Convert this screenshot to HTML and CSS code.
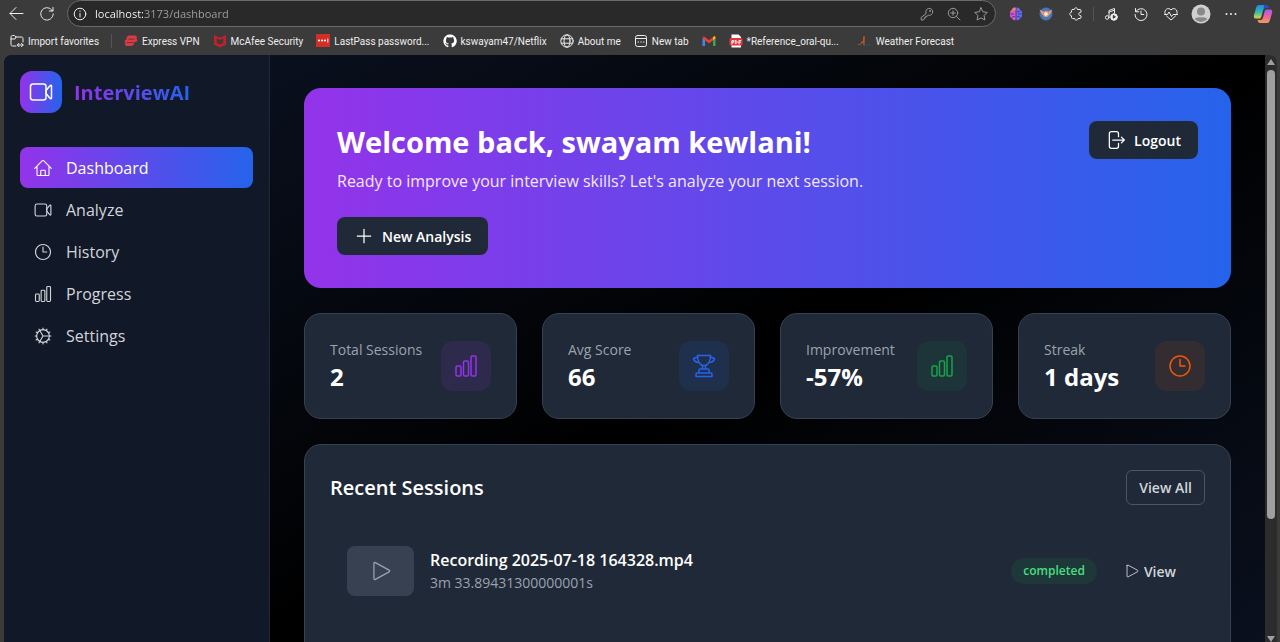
FILE: index.html
```html
<!DOCTYPE html>
<html lang="en">
<head>
    <meta charset="UTF-8">
    <meta name="viewport" content="width=device-width, initial-scale=1.0">
    <title>InterviewAI - Dashboard</title>
    <link rel="stylesheet" href="styles.css">
</head>
<body>
    <!-- Shared icons -->
    <svg class="sprite" aria-hidden="true">
        <symbol id="video" viewBox="0 0 24 24"><rect x="1.500" y="4" width="15.500" height="16" rx="2.500"/><path d="M17 10.500l4.200-5c.5-.5 1.300-.2 1.300.5v12c0 .7-.8 1-1.300.5l-4.200-5z"/></symbol>
        <symbol id="clock" viewBox="0 0 24 24"><circle cx="12" cy="12" r="10"/><path d="M12 5.500V12h5"/></symbol>
        <symbol id="bars" viewBox="0 0 24 24"><rect x="2" y="12" width="5" height="10" rx="1.200"/><rect x="9.500" y="7" width="5" height="15" rx="1.200"/><rect x="17" y="2" width="5" height="20" rx="1.200"/></symbol>
        <symbol id="play" viewBox="0 0 24 24"><path d="M3.500 3v18c0 1 .8 1.500 1.700 1.100l16.500-9c1-.5 1-1.700 0-2.200L5.200 1.900C4.300 1.500 3.500 2 3.500 3z"/></symbol>
    </svg>

    <header class="browser">
        <div class="toolbar">
            <button class="tool" aria-label="Back"><svg width="16" height="16" viewBox="0 0 16 16"><path d="M14 7.500H1M7 1.500l-6 6 6 6"/></svg></button>
            <button class="tool" aria-label="Reload"><svg width="16" height="16" viewBox="0 0 16 16"><path d="M13.500 5A6.200 6.200 0 1 0 14.200 8M14 1.500V5h-3.700"/></svg></button>
            <div class="address">
                <svg width="14" height="14" viewBox="0 0 14 14"><circle cx="7" cy="7" r="5.800"/><path d="M7 6.500V10M7 4v.5"/></svg>
                <input class="url" type="text" aria-label="Address" value="localhost:3173/dashboard">
                <svg class="dim" width="14" height="14" viewBox="0 0 14 14"><path d="M6 6.200a3.500 3.500 0 1 1 2.200 2L7 9.300H5.700v1.400H4.300V12l-1 1H1.200v-2.200z"/><circle cx="10" cy="4" r=".5"/></svg>
                <svg class="dim" width="14" height="14" viewBox="0 0 14 14"><circle cx="6" cy="6" r="4.700"/><path d="M9.500 9.500L13 13M6 3.800v4.400M3.800 6h4.400"/></svg>
                <svg class="dim" width="14" height="14" viewBox="0 0 14 14"><path d="M7 .8l1.900 4 4.300.6-3.100 3.100.8 4.500L7 10.900 3.100 13l.8-4.500L.8 5.400l4.300-.6z"/></svg>
            </div>
            <button class="tool" aria-label="Brain"><svg class="solid" width="14" height="14" viewBox="0 0 14 14"><path fill="#d955c8" d="M6.600 1v12C5 13.800 3 12.700 3 11 1.200 10.500.5 8.500 1.200 7 .5 5 1.500 3.300 3 3c.2-2 2.400-3 3.600-2z"/><path fill="#6a6bf0" d="M7.400 1v12c1.600.8 3.600-.3 3.600-2 1.800-.5 2.500-2.500 1.800-4 .7-2-.3-3.700-1.800-4-.2-2-2.400-3-3.600-2z"/><path fill="#f0836b" d="M3 3c.2-2 2.400-3 3.600-2v2.500C5 3 4 4 1.500 4.500 1.800 3.600 2.300 3.100 3 3z"/><path class="crease" d="M2 7h2.500M3.500 10l2-.5M12 7H9.500M10.500 4.500L8.500 5M10.500 10l-2-.5"/></svg></button>
            <button class="tool" aria-label="Web assistant"><svg class="solid" width="14" height="14" viewBox="0 0 14 14"><circle cx="7" cy="7" r="6.500" fill="#3f78bd"/><path fill="#f1a27a" d="M.5 2.500l4 2.300h5l4-2.300-3 5.500H3.500z"/><circle cx="7" cy="7" r="3.200" fill="#ed8b5b"/><circle cx="7" cy="7" r="1.800" fill="#fff"/></svg></button>
            <button class="tool" aria-label="Extensions"><svg width="14" height="14" viewBox="0 0 14 14"><path d="M3.500 2.500h1.700c0-2.200 3.300-2.200 3.300 0H11c.6 0 1 .4 1 1v1.700c-3 0-3 3.600 0 3.600v1.700c0 .6-.4 1-1 1H9c0 2.200-3.300 2.200-3.300 0H3.500c-.6 0-1-.4-1-1V8.800C.3 8.800.3 5.200 2.500 5.200V3.500c0-.6.400-1 1-1z"/></svg></button>
            <span class="divider"></span>
            <button class="tool" aria-label="Media"><svg width="14" height="14" viewBox="0 0 14 14"><path d="M5 10V3.500l5.500-2V6M5 5.200l5.500-2"/><circle cx="3.200" cy="10.500" r="1.800"/><circle cx="10" cy="10" r="3.300" fill="#eee"/><path stroke="#333" fill="#333" d="M9.300 8.800v2.400l1.800-1.200z"/></svg></button>
            <button class="tool" aria-label="History"><svg width="14" height="14" viewBox="0 0 14 14"><path d="M1.500 1.500v3.300h3.300M1.800 4.600A6 6 0 1 1 1 7.500M7 4v3.500h2.800"/></svg></button>
            <button class="tool" aria-label="Performance"><svg width="14" height="14" viewBox="0 0 14 14"><path d="M1 6.500C-.2 2.500 4.500-.2 7 3c2.500-3.200 7.200-.5 6 3.500M2.500 9L7 13l4.500-4M.5 7.500h3L5 5l2.500 4.500L9 7.500h4.500"/></svg></button>
            <button class="tool" aria-label="Profile"><svg class="solid" width="20" height="20" viewBox="0 0 20 20"><circle cx="10" cy="10" r="9.500" fill="#d1cfcd"/><circle cx="10" cy="7.500" r="4" fill="#8a8886"/><path fill="#8a8886" d="M3.800 15c0-2.500 12.400-2.500 12.400 0a8 8 0 0 1-12.400 0z"/></svg></button>
            <button class="tool" aria-label="More"><svg class="solid" width="14" height="14" viewBox="0 0 14 14"><g fill="#eee"><circle cx="2.500" cy="7" r="1"/><circle cx="7" cy="7" r="1"/><circle cx="11.500" cy="7" r="1"/></g></svg></button>
            <button class="tool copilot" aria-label="Copilot">
                <svg class="solid" width="20" height="20" viewBox="0 0 20 20">
                    <defs>
                        <linearGradient id="cool" x2="0" y2="1"><stop stop-color="#2389e8"/><stop offset=".5" stop-color="#2cb9ae"/><stop offset="1" stop-color="#e2d23c"/></linearGradient>
                        <linearGradient id="warm" x2="0" y2="1"><stop stop-color="#a45af0"/><stop offset=".5" stop-color="#ed62a3"/><stop offset="1" stop-color="#f59a55"/></linearGradient>
                    </defs>
                    <path fill="url(#cool)" d="M6 1h7c1.500 0 2 1 2.500 3h-3c-1.500 0-2 1-2.500 2.500L8.500 12c-.5 2-1 2.500-2.500 2.500H3C.8 14.500.5 13 1 11l2.200-7.500C3.700 1.800 4.500 1 6 1z"/>
                    <path fill="url(#warm)" d="M14 19H7c-1.500 0-2-1-2.500-3h3c1.500 0 2-1 2.500-2.500L11.500 8c.5-2 1-2.500 2.500-2.500h3c2.200 0 2.500 1.500 2 3.500l-2.200 7.500C16.300 18.200 15.500 19 14 19z"/>
                    <path fill="#2550bd" d="M11 1h2c1.500 0 2 1 2.500 3h-3c-1 0-1.700.5-2 1z"/>
                </svg>
            </button>
        </div>

        <nav class="favorites" aria-label="Favorites">
            <a href="#"><svg width="14" height="14" viewBox="0 0 14 14"><path d="M6 12H2.500C1.500 12 1 11.500 1 10.500V3c0-1 .5-1.500 1.500-1.500h2L6 3h5.500c1 0 1.500.5 1.500 1.500V8M1 5h4l1-2M7.500 11H13M9 9.300L7.300 11 9 12.700M11.500 9.300l1.700 1.700-1.700 1.700"/></svg>Import favorites</a>
            <span class="divider"></span>
            <a href="#"><svg class="solid" width="14" height="14" viewBox="0 0 14 14"><path fill="#dc3945" d="M4.500 1.500H11c2.500 0 2.500 3.500.5 3.500H13c1 1.500 0 3-1.500 3H10c0 2.500-1 4-3 4H3C1 12 .5 10 2 8.500H1C0 7 1 5.500 2.500 5.500 2.500 3.500 3 2 4.500 1.500z"/><path fill="#3b3b3b" d="M4.500 4.700h6v.7h-6zM3 8h6v.7H3z"/></svg>Express VPN</a>
            <a href="#"><svg class="solid" width="14" height="14" viewBox="0 0 14 14"><path fill="#c3202b" d="M1 1l6 2.800L13 1v9.500L7 13.500l-6-3zm2.800 3.300v4.600L7 10.500l3.200-1.600V4.300L7 6z"/></svg>McAfee Security</a>
            <a href="#"><svg class="solid" width="14" height="14" viewBox="0 0 14 14"><rect width="14" height="13" fill="#d32d27"/><g fill="#fff"><circle cx="3" cy="6.500" r="1.100"/><circle cx="6" cy="6.500" r="1.100"/><circle cx="9" cy="6.500" r="1.100"/><rect x="11.300" y="4.500" width="1" height="4"/></g></svg>LastPass password...</a>
            <a href="#"><svg class="solid" width="14" height="14" viewBox="0 0 14 14"><path fill="#fff" d="M7 .5a6.500 6.500 0 0 0-2.100 12.700c.4 0 .5-.2.500-.4v-1.400c-1.500.3-2-.4-2.300-1.100-.2-.4-.5-.7-.8-.9-.2-.2-.1-.5.3-.4.600.1 1 .6 1.300 1 .4.600 1 .5 1.500.3 0-.4.200-.7.400-.9-1.700-.2-2.900-.9-2.900-3 0-.7.300-1.300.7-1.800-.1-.5-.1-1.100.1-1.700.7 0 1.300.4 1.800.7 1-.2 2-.2 3 0 .5-.3 1.100-.7 1.800-.7.200.6.200 1.200.1 1.700.4.500.7 1.100.7 1.800 0 2.100-1.200 2.800-2.900 3 .3.300.5.800.5 1.400v2c0 .2.100.4.500.4A6.500 6.500 0 0 0 7 .5z"/></svg>kswayam47/Netflix</a>
            <a href="#"><svg width="14" height="14" viewBox="0 0 14 14"><circle cx="7" cy="7" r="6.200"/><ellipse cx="7" cy="7" rx="3" ry="6.200"/><path d="M1.300 4.800h11.400M1.300 9.200h11.400"/></svg>About me</a>
            <a href="#"><svg width="14" height="14" viewBox="0 0 14 14"><rect x="1.500" y="1.500" width="11" height="11" rx="2"/><path d="M2 4.500h10M4 8h.5M6.800 8h.5M9.500 8h.5"/></svg>New tab</a>
            <a href="#" aria-label="Gmail"><svg class="solid" width="14" height="14" viewBox="0 0 14 14"><path fill="#4285f4" d="M.5 4L3 5.500V12H.5z"/><path fill="#34a853" d="M11 5.500L13.500 4v8H11z"/><path fill="#ea4335" d="M1.500 2L7 6.300 12.500 2 13 5 7 9.300 1 5z"/><path fill="#fbbc04" d="M11 3.200l1.500-1.200c1 .3 1 1 1 2.500L11 6z"/></svg></a>
            <a href="#"><svg class="solid" width="14" height="14" viewBox="0 0 14 14"><path fill="#fff" d="M2.500.5h7L12 3v10.500H2.500z"/><rect x=".5" y="4" width="13" height="7.500" rx="1" fill="#e2343b"/><path class="pdf-mark" d="M3 10V6.500h1.500v1.700H3M6.200 6.500v3h.6c1.700 0 1.700-3 0-3zM10 10V6.500h1.800M10 8.200h1.500"/></svg>*Reference_oral-qu...</a>
            <a href="#" class="spaced"><svg width="14" height="14" viewBox="0 0 14 14"><path stroke="#26557d" d="M7.500 11H12"/><path stroke="#d2611e" d="M.5 10.500c1.500 1 3-1 3.500-3 1 3 1.500 2.500 2-5v8.500"/></svg>Weather Forecast</a>
        </nav>
    </header>

    <div class="viewport">
        <div class="page">
            <aside class="sidebar">
                <a class="brand" href="#">
                    <span class="brand-icon"><svg width="24" height="24"><use href="#video"/></svg></span>
                    <span class="brand-name">InterviewAI</span>
                </a>
                <nav class="menu">
                    <a class="active" href="#"><svg width="18" height="18" viewBox="0 0 24 24"><path d="M1 12.500L10.800 2.600c.7-.7 1.700-.7 2.400 0L23 12.500M4 10v11c0 .7.400 1 1 1h14c.6 0 1-.3 1-1V10M9 22v-6c0-.6.400-1 1-1h4c.6 0 1 .4 1 1v6"/></svg>Dashboard</a>
                    <a href="#"><svg width="18" height="18"><use href="#video"/></svg>Analyze</a>
                    <a href="#"><svg width="18" height="18"><use href="#clock"/></svg>History</a>
                    <a href="#"><svg width="18" height="18"><use href="#bars"/></svg>Progress</a>
                    <a href="#"><svg width="18" height="18" viewBox="0 0 24 24"><circle cx="12" cy="12" r="8.500"/><path d="M12 12h8.500M12 12L7.700 4.700M12 12l-4.300 7.300M12 3.500V1.500M12 22.500v-2M3.500 12h-2M20.500 12h2M16.300 4.700l1-1.800M7.700 4.700l-1-1.800M19.300 7.800l1.800-1M4.700 7.800l-1.800-1M19.300 16.200l1.800 1M4.700 16.200l-1.800 1M16.300 19.300l1 1.800M7.700 19.300l-1 1.800"/></svg>Settings</a>
                </nav>
            </aside>

            <main class="content">
                <section class="hero">
                    <div class="hero-text">
                        <h1>Welcome back, swayam kewlani!</h1>
                        <p>Ready to improve your interview skills? Let's analyze your next session.</p>
                        <button class="btn"><svg width="20" height="20" viewBox="0 0 24 24"><path d="M12 4v16M4 12h16"/></svg>New Analysis</button>
                    </div>
                    <button class="btn"><svg width="20" height="20" viewBox="0 0 24 24"><path d="M15 8V4.500C15 3 14 2 12.500 2h-6C5 2 4 3 4 4.500v15C4 21 5 22 6.500 22h6c1.500 0 2.500-1 2.500-2.500V16M8 12h14M18.500 8.500L22 12l-3.500 3.500"/></svg>Logout</button>
                </section>

                <section class="stats">
                    <div class="stat purple">
                        <div><p class="label">Total Sessions</p><p class="value">2</p></div>
                        <span class="stat-icon"><svg width="24" height="24"><use href="#bars"/></svg></span>
                    </div>
                    <div class="stat blue">
                        <div><p class="label">Avg Score</p><p class="value">66</p></div>
                        <span class="stat-icon"><svg width="24" height="24" viewBox="0 0 24 24"><path d="M5.500 1.500h13c0 5-1.500 8.500-5 10h-3c-3.500-1.500-5-5-5-10zM5.500 3L1.500 4.500c.5 2.500 2.500 4 5.500 4M18.500 3l4 1.500c-.5 2.500-2.500 4-5.500 4M10.500 11.500v3.500M13.500 11.500v3.500M7 19v-3c0-.6.400-1 1-1h8c.6 0 1 .4 1 1v3M4 22.500V20c0-.6.400-1 1-1h14c.6 0 1 .4 1 1v2.500z"/></svg></span>
                    </div>
                    <div class="stat green">
                        <div><p class="label">Improvement</p><p class="value">-57%</p></div>
                        <span class="stat-icon"><svg width="24" height="24"><use href="#bars"/></svg></span>
                    </div>
                    <div class="stat orange">
                        <div><p class="label">Streak</p><p class="value">1 days</p></div>
                        <span class="stat-icon"><svg width="24" height="24"><use href="#clock"/></svg></span>
                    </div>
                </section>

                <section class="recent">
                    <div class="recent-head">
                        <h2>Recent Sessions</h2>
                        <button class="btn-outline">View All</button>
                    </div>
                    <div class="session">
                        <span class="thumb"><svg width="20" height="20"><use href="#play"/></svg></span>
                        <div class="session-info">
                            <h3>Recording 2025-07-18 164328.mp4</h3>
                            <p>3m 33.89431300000001s</p>
                        </div>
                        <span class="status">completed</span>
                        <button class="btn-ghost"><svg width="14" height="14"><use href="#play"/></svg>View</button>
                    </div>
                </section>
            </main>
        </div>
        <div class="scrollbar">
            <span class="arrow up"></span>
            <span class="track"><span class="handle"></span></span>
            <span class="arrow down"></span>
        </div>
    </div>
</body>
</html>
```
FILE: styles.css
```css
* {
    box-sizing: border-box;
    margin: 0;
    padding: 0;
}
body {
    display: flex;
    flex-direction: column;
    height: 100vh;
    overflow: hidden;
    font-family: "Open Sans", "Noto Sans", sans-serif;
    background: #3b3b3b;
    color: #fff;
}
a {
    color: inherit;
    text-decoration: none;
}
button, input {
    font: inherit;
    color: inherit;
    background: none;
    border: none;
}
button {
    cursor: pointer;
}
svg {
    flex: none;
    fill: none;
    stroke: currentColor;
    stroke-width: 1.5;
    stroke-linecap: round;
    stroke-linejoin: round;
}
svg.solid {
    stroke: none;
}
.sprite {
    display: none;
}

/* Browser bars */
.browser {
    flex: none;
    color: #eee;
}
.browser svg {
    stroke-width: 1;
}
.crease {
    stroke: #4335a8;
}
.pdf-mark {
    stroke: #fff;
}
.toolbar {
    display: flex;
    align-items: center;
    height: 27px;
    padding-left: 2px;
}
.tool {
    display: flex;
    align-items: center;
    justify-content: center;
    width: 30px;
    height: 26px;
}
.copilot {
    width: 34px;
}
.address {
    display: flex;
    flex: 1;
    align-items: center;
    gap: 13px;
    height: 27px;
    margin: 0 5px;
    padding: 0 7px 0 5px;
    background: #292929;
    border: 1px solid #6b6b6b;
    border-radius: 14px;
}
.url {
    flex: 1;
    min-width: 0;
    margin-left: -5px;
    font-size: 11px;
    outline: none;
    color: transparent;
    background: linear-gradient(to right, #fff 49px, #a3a3a3 49px);
    background-clip: text;
    -webkit-background-clip: text;
}
.dim {
    color: #999;
}
.divider {
    width: 1px;
    height: 14px;
    margin: 0 2px;
    background: #555;
}
.favorites {
    display: flex;
    align-items: center;
    gap: 13px;
    height: 28px;
    padding-left: 10px;
    font-family: Roboto, sans-serif;
    font-size: 10px;
    white-space: nowrap;
}
.favorites a {
    display: flex;
    align-items: center;
    gap: 4px;
}
.favorites .divider {
    margin: 0 -1px;
}
.favorites .spaced {
    margin-left: 6px;
}

/* Page area */
.viewport {
    display: flex;
    flex: 1;
    min-height: 0;
    padding: 0 3px 0 4px;
}
.page {
    display: flex;
    flex: 1;
    overflow: hidden;
    border-top-left-radius: 8px;
    background: linear-gradient(to bottom right, #0c1426, #000, #0c1426) 0 0 / 100% 126%;
}
.scrollbar {
    display: flex;
    flex-direction: column;
    align-items: center;
    justify-content: space-between;
    width: 12px;
    padding: 4px 0 0;
    background: #2c2c2c;
    border-top-right-radius: 8px;
}
.track {
    flex: 1;
    margin: 5px 0;
}
.handle {
    display: block;
    width: 8px;
    height: 80%;
    background: #9f9f9f;
    border-radius: 4px;
}
.arrow {
    border: 4px solid transparent;
}
.up {
    border-top: none;
    border-bottom: 6px solid #9f9f9f;
}
.down {
    border-bottom: none;
    border-top: 6px solid #9f9f9f;
}

/* Sidebar */
.sidebar {
    flex: none;
    width: 266px;
    padding: 16px;
    background: #111827;
    border-right: 1px solid #1f2937;
}
.brand {
    display: flex;
    align-items: center;
    gap: 12px;
    margin-bottom: 34px;
}
.brand-icon {
    display: flex;
    align-items: center;
    justify-content: center;
    width: 42px;
    height: 42px;
    border-radius: 12px;
    background: linear-gradient(to right, #9333ea, #2563eb);
}
.brand-name {
    font-size: 20px;
    font-weight: 700;
    color: transparent;
    background: linear-gradient(to right, #9333ea, #2563eb);
    background-clip: text;
    -webkit-background-clip: text;
}
.menu {
    display: flex;
    flex-direction: column;
    gap: 1px;
}
.menu a {
    display: flex;
    align-items: center;
    gap: 14px;
    height: 41px;
    padding: 0 14px;
    font-size: 16px;
    color: #d1d5db;
    border-radius: 8px;
}
.menu .active {
    color: #fff;
    background: linear-gradient(to right, #9333ea, #2563eb);
}

/* Main content */
.content {
    display: flex;
    flex: 1;
    flex-direction: column;
    gap: 25px;
    min-width: 0;
    padding: 33px 34px;
}
.hero {
    display: flex;
    flex: none;
    align-items: flex-start;
    justify-content: space-between;
    padding: 33px;
    border-radius: 17px;
    background: linear-gradient(to right, #9333ea, #2563eb);
}
.hero h1 {
    margin-bottom: 6px;
    font-size: 29px;
    line-height: 42px;
}
.hero p {
    margin-bottom: 24px;
    font-size: 16px;
    line-height: 24px;
    color: #f3e8ff;
}
.btn {
    display: flex;
    align-items: center;
    gap: 8px;
    height: 38px;
    padding: 0 17px;
    font-size: 14px;
    font-weight: 600;
    background: #1f2937;
    border-radius: 8px;
}
.stats {
    display: grid;
    flex: none;
    grid-template-columns: repeat(4, 1fr);
    gap: 25px;
}
.stat, .recent {
    background: #1f2937;
    border: 1px solid #374151;
    border-radius: 17px;
}
.stat {
    display: flex;
    align-items: center;
    justify-content: space-between;
    padding: 25px;
}
.label {
    font-size: 14px;
    line-height: 21px;
    color: #9ca3af;
}
.value {
    font-size: 24px;
    font-weight: 700;
    line-height: 33px;
}
.stat-icon {
    display: flex;
    align-items: center;
    justify-content: center;
    width: 50px;
    height: 50px;
    border-radius: 12px;
}
.purple .stat-icon {
    color: #9333ea;
    background: rgba(147, 51, 234, 0.12);
}
.blue .stat-icon {
    color: #2563eb;
    background: rgba(37, 99, 235, 0.12);
}
.green .stat-icon {
    color: #16a34a;
    background: rgba(22, 163, 74, 0.1);
}
.orange .stat-icon {
    color: #ea580c;
    background: rgba(234, 88, 12, 0.1);
}

/* Recent sessions */
.recent {
    flex: none;
    min-height: 265px;
    padding: 25px;
}
.recent-head {
    display: flex;
    align-items: center;
    justify-content: space-between;
    margin-bottom: 24px;
}
.recent h2 {
    font-size: 20px;
    font-weight: 600;
}
.btn-outline {
    height: 35px;
    padding: 0 12px;
    font-size: 14px;
    font-weight: 600;
    color: #d1d5db;
    border: 1px solid #4b5563;
    border-radius: 6px;
}
.session {
    display: flex;
    align-items: center;
    gap: 16px;
    padding: 17px;
}
.thumb {
    display: flex;
    align-items: center;
    justify-content: center;
    width: 67px;
    height: 50px;
    color: #9ca3af;
    background: #374151;
    border-radius: 8px;
}
.session-info {
    flex: 1;
}
.session h3 {
    font-size: 16px;
    font-weight: 600;
    line-height: 24px;
}
.session p {
    font-size: 14px;
    line-height: 22px;
    color: #9ca3af;
}
.status {
    padding: 4px 12px;
    font-size: 12px;
    font-weight: 600;
    line-height: 18px;
    color: #4ade80;
    background: rgba(22, 163, 74, 0.12);
    border-radius: 13px;
}
.btn-ghost {
    display: flex;
    align-items: center;
    gap: 5px;
    padding: 8px 12px;
    font-size: 14px;
    font-weight: 600;
    color: #d1d5db;
}
```
